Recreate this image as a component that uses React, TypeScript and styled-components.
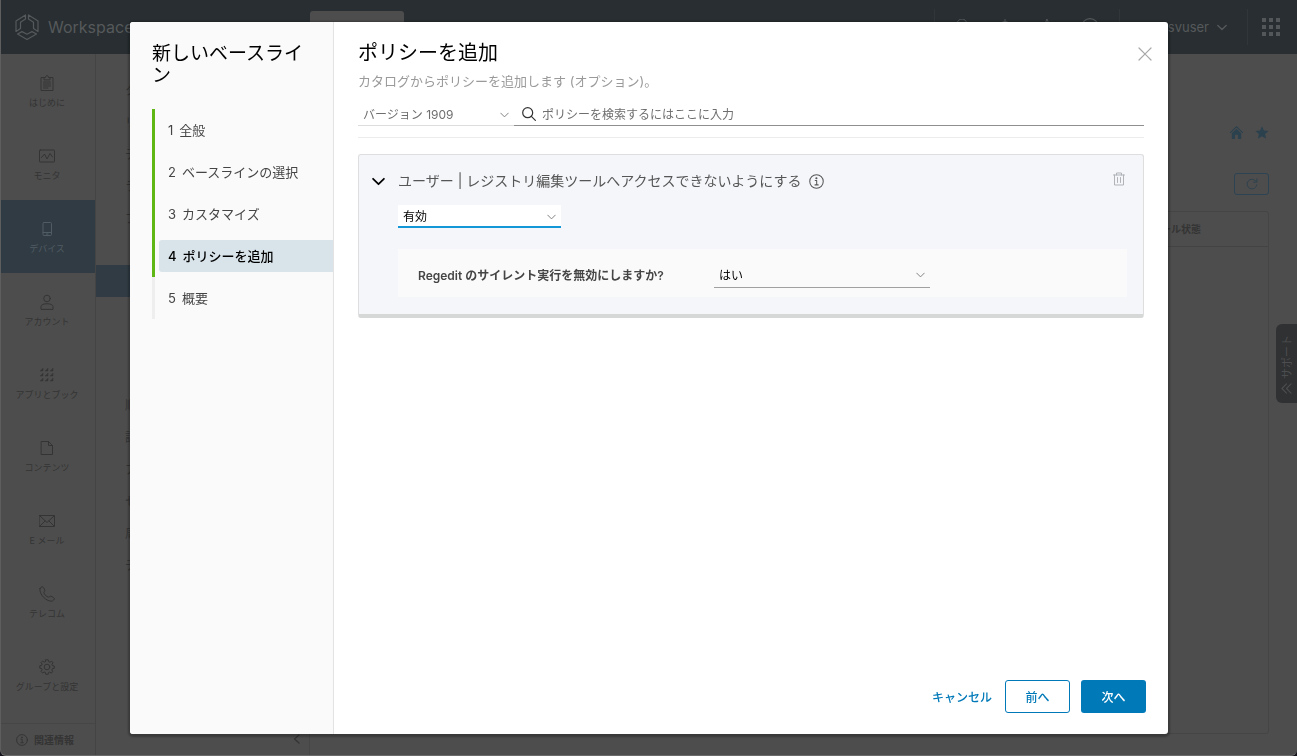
import React from "react";
import styled, { createGlobalStyle, css } from "styled-components";

const GlobalStyle = createGlobalStyle`
  *, *::before, *::after { box-sizing: border-box; }
  body {
    margin: 0;
    background: #15141c;
    font-family: Inter, "Noto Sans CJK JP", sans-serif;
    font-size: 12px;
    color: #333;
  }
  button, input, select { font: inherit; color: inherit; }
  button { cursor: pointer; background: none; border: 0; padding: 0; }
  a { color: inherit; text-decoration: none; }
  ul, ol { list-style: none; margin: 0; padding: 0; }
  h1, h2, h3, p { margin: 0; font-weight: 400; }
  svg { display: block; flex: none; }
`;

/* ---------- console behind the dialog ---------- */

const Console = styled.div`
  display: flex;
  flex-direction: column;
  height: 100vh;
  overflow: hidden;
  background: #4d4d4d;
  color: #343434;
  border-left: 1px solid #5e5e5e;
  border-bottom: 1px solid #6a6a6a;
  border-radius: 0 0 6px 6px;
`;

const TopBar = styled.header`
  display: flex;
  align-items: center;
  height: 54px;
  flex: none;
  padding-left: 13px;
  background: #282e31;
  color: #56595b;
`;

const Brand = styled.div`
  display: flex;
  align-items: center;
  gap: 8px;
  width: 296px;
  font-size: 16px;
  white-space: nowrap;
`;

const OrgPicker = styled.button`
  width: 94px;
  height: 32px;
  border-radius: 3px;
  background: #4d4d4d;
`;

const BarTools = styled.div`
  display: flex;
  align-items: center;
  gap: 26px;
  height: 36px;
  margin-left: auto;
  padding: 0 20px;
  border-left: 1px solid #303639;
`;

const UserMenu = styled.button`
  display: flex;
  align-items: center;
  justify-content: flex-end;
  gap: 8px;
  width: 128px;
  height: 36px;
  padding-right: 20px;
  border-left: 1px solid #303639;
  font-size: 13px;
`;

const AppsButton = styled.button`
  display: flex;
  align-items: center;
  width: 50px;
  height: 36px;
  padding-left: 14px;
  border-left: 1px solid #303639;
`;

const Body = styled.div`
  display: flex;
  flex: 1;
  min-height: 0;
`;

const SideBar = styled.nav`
  display: flex;
  flex-direction: column;
  width: 95px;
  flex: none;
  border-right: 1px solid #444;
`;

const SideLink = styled.a<{ $active?: boolean }>`
  display: flex;
  flex-direction: column;
  align-items: center;
  gap: 5px;
  height: 73px;
  padding: 21px 2px 0 0;
  font-size: 9px;
  line-height: 14px;
  ${(p) =>
    p.$active &&
    css`
      background: #303b43;
      color: #505c64;
    `}
`;

const AboutLink = styled.a`
  display: flex;
  align-items: center;
  gap: 6px;
  height: 32px;
  margin-top: auto;
  padding-left: 15px;
  border-top: 1px solid #464646;
  font-size: 10px;
  font-weight: 700;
`;

const SubNav = styled.nav`
  display: flex;
  flex-direction: column;
  width: 214px;
  flex: none;
  padding-top: 21px;
  border-right: 1px solid #464646;
`;

const SubGroup = styled.ul`
  padding-left: 29px;
  font-size: 12px;
  line-height: 32px;
`;

const SubCurrent = styled.a`
  display: block;
  height: 32px;
  margin: 30px 0 93px;
  background: #303b43;
`;

const Collapse = styled.button`
  margin: auto 9px 11px auto;
`;

const Main = styled.main`
  display: flex;
  flex-direction: column;
  align-items: flex-end;
  flex: 1;
  min-width: 0;
  padding: 71px 28px 21px 24px;
  color: #2b414e;
`;

const Shortcuts = styled.div`
  display: flex;
  gap: 11px;
`;

const RefreshButton = styled.button`
  display: flex;
  align-items: center;
  justify-content: center;
  width: 35px;
  height: 22px;
  margin: 33px 0 16px;
  border: 1px solid #2b4352;
  border-radius: 3px;
`;

const GridFrame = styled.div`
  flex: 1;
  width: 100%;
  border: 1px solid #454545;
  border-radius: 3px;
`;

const Grid = styled.table`
  width: 100%;
  border-collapse: collapse;
  font-size: 10px;
  color: #343434;

  th {
    height: 34px;
    padding: 0 67px 0 0;
    border-bottom: 1px solid #434343;
    text-align: right;
    font-weight: 700;
  }
`;

const SupportTab = styled.button`
  position: fixed;
  right: 0;
  top: 324px;
  display: flex;
  flex-direction: column;
  align-items: center;
  gap: 4px;
  width: 21px;
  padding: 11px 0 9px;
  border-radius: 6px 0 0 6px;
  background: #303133;
  color: #4c4d4f;
  font-size: 11px;
  line-height: 14px;
`;

const SupportText = styled.span`
  writing-mode: vertical-rl;
  text-orientation: sideways;
  transform: rotate(180deg);
`;

/* ---------- dialog ---------- */

const Overlay = styled.div`
  position: fixed;
  inset: 0;
  display: flex;
  padding: 22px 129px 22px 130px;
`;

const Dialog = styled.section`
  display: flex;
  flex: 1;
  min-width: 0;
  overflow: hidden;
  border-radius: 3px;
  background: #fff;
  box-shadow: 0 1px 2px 2px rgba(0, 0, 0, 0.25);
`;

const StepPane = styled.aside`
  width: 204px;
  flex: none;
  padding: 21px 0 0 22px;
  border-right: 1px solid #e3e3e3;
  background: #fafafa;
`;

const WizardTitle = styled.h1`
  width: 158px;
  height: 44px;
  margin-bottom: 22px;
  font-size: 19px;
  line-height: 22px;
  color: #000;
`;

const Step = styled.li<{ $reached?: boolean }>`
  display: flex;
  align-items: center;
  height: 42px;
  padding-left: 4px;
  border-left: 3px solid ${(p) => (p.$reached ? "#5eb715" : "#eee")};
`;

const StepButton = styled.button<{ $current?: boolean }>`
  display: flex;
  align-items: baseline;
  gap: 6px;
  width: 100%;
  height: 32px;
  padding: 0 0 0 9px;
  border-radius: 3px 0 0 3px;
  font-size: 13px;
  line-height: 32px;
  color: #454545;
  ${(p) =>
    p.$current &&
    css`
      background: #d9e4ea;
      color: #000;
      font-weight: 500;
    `}
`;

const Page = styled.div`
  display: flex;
  flex-direction: column;
  flex: 1;
  min-width: 0;
  padding: 19px 24px 21px;
`;

const PageHead = styled.div`
  display: flex;
  justify-content: space-between;
  align-items: flex-start;
`;

const PageTitle = styled.h2`
  font-size: 20px;
  line-height: 24px;
  color: #000;
`;

const Lead = styled.p`
  margin-top: 7px;
  font-size: 13px;
  line-height: 18px;
  color: #9a9a9a;
`;

const CloseButton = styled.button`
  padding: 6px 0;
  margin-right: -8px;
  color: #a8a8a8;
`;

const FilterRow = styled.div`
  display: flex;
  align-items: flex-end;
  margin-top: 12px;
  padding-bottom: 11px;
  border-bottom: 1px solid #ececec;
`;

const SelectBox = styled.div<{ $width: number }>`
  display: grid;
  align-items: center;
  width: ${(p) => p.$width}px;
  flex: none;

  > * { grid-area: 1 / 1; }
  > svg {
    justify-self: end;
    margin-right: 5px;
    color: #808080;
    pointer-events: none;
  }
`;

const Select = styled.select<{ $look: "quiet" | "focused" | "plain" }>`
  appearance: none;
  width: 100%;
  height: 23px;
  padding: 0 20px 0 5px;
  border: 0;
  border-radius: 0;
  outline: 0;
  background: transparent;
  font-size: 12px;
  ${(p) =>
    p.$look === "quiet" &&
    css`
      border-bottom: 1px solid #ddd;
      color: #6e6e6e;
    `}
  ${(p) =>
    p.$look === "focused" &&
    css`
      padding-top: 2px;
      border-bottom: 2px solid #1497d6;
      background: #fff;
      color: #000;
    `}
  ${(p) =>
    p.$look === "plain" &&
    css`
      height: 25px;
      padding-top: 2px;
      border-bottom: 1px solid #a0a0a0;
      color: #000;
    `}
`;

const SearchBox = styled.label`
  display: flex;
  align-items: center;
  gap: 6px;
  flex: 1;
  height: 24px;
  padding-left: 8px;
  border-bottom: 1px solid #8f8f8f;
  color: #333;

  input {
    flex: 1;
    min-width: 0;
    padding: 1px 0 0;
    border: 0;
    outline: 0;
    background: none;
    font-size: 12px;
  }
  input::placeholder { color: #6e6e6e; opacity: 1; }
`;

const Card = styled.article`
  display: grid;
  grid-template-columns: 26px 1fr;
  margin-top: 16px;
  padding: 16px 16px 17px 13px;
  border: 1px solid #dedede;
  border-bottom: 4px solid #d6d7d7;
  border-radius: 3px;
  background: #f4f6fa;
`;

const CardHead = styled.div`
  display: flex;
  align-items: center;
  height: 20px;
`;

const Toggle = styled.button`
  align-self: center;
  color: #000;
`;

const PolicyName = styled.h3`
  margin-right: 8px;
  font-size: 14px;
  line-height: 20px;
  color: #565656;
`;

const InfoButton = styled.button`
  color: #565656;
`;

const DeleteButton = styled.button`
  margin-left: auto;
  padding: 0 1px 4px 0;
  color: #b0b3b7;
`;

const CardBody = styled.div`
  grid-column: 2;
  padding-top: 14px;
`;

const Setting = styled.div`
  display: flex;
  align-items: center;
  height: 48px;
  margin-top: 21px;
  padding: 4px 0 0 20px;
  background: #fafafa;

  label {
    width: 296px;
    padding-bottom: 2px;
    font-weight: 600;
    color: #454545;
  }
`;

const Footer = styled.footer`
  display: flex;
  justify-content: flex-end;
  gap: 11px;
  margin: auto -2px 0 0;
`;

const Action = styled.button<{ $kind: "link" | "outline" | "solid" }>`
  min-width: 65px;
  height: 33px;
  border-radius: 3px;
  font-weight: 500;
  color: #0079b8;
  ${(p) => p.$kind === "link" && css`margin-right: 2px; min-width: 0;`}
  ${(p) => p.$kind === "outline" && css`border: 1px solid #0079b8;`}
  ${(p) =>
    p.$kind === "solid" &&
    css`
      background: #0079b8;
      color: #fff;
    `}
`;

/* ---------- icons ---------- */

type IconProps = {
  size?: number;
  width?: number;
  height?: number;
  box?: string;
  stroke?: number;
  children: React.ReactNode;
};

const Icon = ({ size = 16, width, height, box = "0 0 16 16", stroke = 1, children }: IconProps) => (
  <svg
    width={width ?? size}
    height={height ?? size}
    viewBox={box}
    fill="none"
    stroke="currentColor"
    strokeWidth={stroke}
    strokeLinecap="round"
    strokeLinejoin="round"
    aria-hidden="true"
  >
    {children}
  </svg>
);

const Chevron = ({ width = 9, stroke = 1.3 }: { width?: number; stroke?: number }) => (
  <Icon width={width} height={Math.round(width * 0.67)} box="0 0 12 8" stroke={stroke}>
    <path d="M1 1.5 6 6.5 11 1.5" />
  </Icon>
);

const Info = ({ size, stroke = 1.1 }: { size: number; stroke?: number }) => (
  <Icon size={size} stroke={stroke}>
    <circle cx="8" cy="8" r="7.2" />
    <path d="M6.6 7h1.6v4.6M6.4 11.6h3.4" />
    <circle cx="7.9" cy="4.5" r=".6" fill="currentColor" />
  </Icon>
);

const Logo = () => (
  <svg width="26" height="28" viewBox="0 0 26 28" fill="none" stroke="#56595b" strokeWidth="1.2" strokeLinejoin="round" aria-hidden="true">
    <path d="M11.500 2V6L6.500 9.200V15.500L2 18.500V8Z" />
    <path d="M14.500 2V6L19.500 9.200V15.500L24 18.500V8Z" />
    <path d="M3.500 21 8 18.600 13 21.200 18 18.600 22.500 21 13 26.500Z" />
  </svg>
);

const nine = [1.5, 6.5, 11.5].flatMap((y) => [1.5, 6.5, 11.5].map((x) => [x, y]));

const navItems: { label: string; active?: boolean; art: React.ReactNode }[] = [
  {
    label: "はじめに",
    art: (
      <>
        <path d="M5 2.500H2V15.500H14V2.500H11" />
        <path d="M5 4.500V2.500H6.500C6.500 0 9.500 0 9.500 2.500H11V4.500Z" />
        <path d="M4.500 7H11.500M4.500 9H11.500M4.500 11H11.500M4.500 13H9" />
      </>
    ),
  },
  {
    label: "モニタ",
    art: (
      <>
        <rect x=".5" y="2" width="15" height="12" rx=".8" />
        <path d="M2.500 9.500 5.500 6 8 11 11 5.500 13.500 9" />
      </>
    ),
  },
  {
    label: "デバイス",
    active: true,
    art: (
      <>
        <rect x="4" y="1.500" width="8.500" height="13" rx="1" />
        <path d="M4 11.500H12.500M7.500 13H9" />
      </>
    ),
  },
  {
    label: "アカウント",
    art: (
      <>
        <circle cx="8" cy="4.500" r="3.300" />
        <path d="M2 15V12.500C2 8.800 14 8.800 14 12.500V15Z" />
      </>
    ),
  },
  {
    label: "アプリとブック",
    art: (
      <>
        {nine.map(([x, y]) => (
          <path key={`${x}-${y}`} d={`M${x + 2.5} ${y}V${y + 2.5}H${x}Z`} fill="currentColor" strokeWidth=".5" />
        ))}
      </>
    ),
  },
  {
    label: "コンテンツ",
    art: <path d="M2.500 1.500H9.500L13.500 5.500V14.500H2.500ZM9.500 1.500V5.500H13.500" />,
  },
  {
    label: "E メール",
    art: (
      <>
        <rect x=".5" y="2.500" width="15" height="11" />
        <path d="M1 3 8 9.500 15 3M1 13 6 8M15 13 10 8" />
      </>
    ),
  },
  {
    label: "テレコム",
    art: (
      <path d="M1 2.500C2.500.2 3.600.2 4.600 1.800L5.800 4C6.300 5 4.600 5.700 4.800 6.600C5.500 8.800 7.200 10.500 9.400 11.200C10.300 11.400 11 9.700 12 10.200L14.500 11.500C16 12.500 15.500 13.600 13.500 15C8 16.500-.5 8 1 2.500Z" />
    ),
  },
  {
    label: "グループと設定",
    art: (
      <>
        <circle cx="8" cy="8" r="2.800" />
        <path d="M6.800.8H9.200L9.600 2.700 11 3.300 12.700 2.200 14 3.800 12.900 5.300 13.400 6.600 15.300 7V9.200L13.400 9.600 12.800 11 13.800 12.700 12.200 14 10.700 13 9.500 13.500 9.200 15.300H6.800L6.400 13.500 5.200 13 3.600 14 2 12.400 3.100 10.800 2.600 9.500.8 9.200V6.800L2.600 6.400 3.200 5.200 2.100 3.600 3.600 2 5.200 3.200 6.400 2.600Z" />
      </>
    ),
  },
];

const steps = ["全般", "ベースラインの選択", "カスタマイズ", "ポリシーを追加", "概要"];
const currentStep = 3;

export default function App() {
  return (
    <>
      <GlobalStyle />
      <Console>
        <TopBar>
          <Brand>
            <Logo />
            Workspace
          </Brand>
          <OrgPicker aria-label="組織グループ" />
          <BarTools>
            <Icon><circle cx="7" cy="5" r="5" /><path d="M10.500 8.500 15 13" /></Icon>
            <Icon><path d="M8 0V2M3 12V7C3 1 13 1 13 7V12Z" /></Icon>
            <Icon><path d="M8 0 10 5H15L11 9 12 14 8 11 4 14 5 9 1 5H6Z" /></Icon>
            <Icon size={18}><circle cx="8" cy="8" r="7.500" /></Icon>
          </BarTools>
          <UserMenu>
            rsvuser
            <Chevron width={10} stroke={1.6} />
          </UserMenu>
          <AppsButton aria-label="アプリ">
            <svg width="18" height="18" viewBox="0 0 18 18" fill="#53575a" aria-hidden="true">
              {[0, 7, 14].flatMap((y) => [0, 7, 14].map((x) => <rect key={`${x}-${y}`} x={x} y={y} width="4" height="4" />))}
            </svg>
          </AppsButton>
        </TopBar>
        <Body>
          <SideBar>
            {navItems.map((item) => (
              <SideLink key={item.label} href="#" $active={item.active}>
                <Icon>{item.art}</Icon>
                {item.label}
              </SideLink>
            ))}
            <AboutLink href="#">
              <Info size={12} stroke={1.3} />
              関連情報
            </AboutLink>
          </SideBar>
          <SubNav>
            <SubGroup>
              {["タグ", "リスト", "データ", "ライフ", "プラン"].map((t) => (
                <li key={t}><a href="#">{t}</a></li>
              ))}
            </SubGroup>
            <SubCurrent href="#" aria-label="ベースライン" />
            <SubGroup>
              {["順守", "証明", "アプリ", "セル", "周辺", "データ"].map((t) => (
                <li key={t}><a href="#">{t}</a></li>
              ))}
            </SubGroup>
            <Collapse aria-label="折りたたむ">
              <Icon width={7} height={10} box="0 0 7 10" stroke={1.3}><path d="M6 1 1.500 5 6 9" /></Icon>
            </Collapse>
          </SubNav>
          <Main>
            <Shortcuts>
              <svg width="15" height="15" viewBox="0 0 16 16" fill="currentColor" aria-hidden="true">
                <path d="M8 1 .8 8l.8.800L8 2.700l6.400 6.100.800-.800ZM8 4 3 8.800V15H6.500V10.500H9.500V15H13V8.800Z" />
              </svg>
              <svg width="14" height="15" viewBox="0 0 16 16" fill="currentColor" aria-hidden="true">
                <path d="m8 .8 2.200 4.900 5.300.500-4 3.600 1.200 5.300L8 12.400l-4.700 2.700 1.200-5.300-4-3.600 5.300-.500Z" />
              </svg>
            </Shortcuts>
            <RefreshButton aria-label="更新">
              <Icon size={12} stroke={1.2}><path d="M13.500 4.500A6.500 6.500 0 1 0 14.500 9M14.500 1V5.500H10" /></Icon>
            </RefreshButton>
            <GridFrame>
              <Grid>
                <thead>
                  <tr><th scope="col">インストール状態</th></tr>
                </thead>
              </Grid>
            </GridFrame>
          </Main>
        </Body>
      </Console>
      <SupportTab>
        <SupportText>サポート</SupportText>
        <Icon size={11} box="0 0 12 12" stroke={1.2}><path d="M6 1 1 6 6 11M11 1 6 6 11 11" /></Icon>
      </SupportTab>

      <Overlay>
        <Dialog role="dialog" aria-modal="true" aria-labelledby="wizard-title">
          <StepPane>
            <WizardTitle id="wizard-title">新しいベースライン</WizardTitle>
            <ol>
              {steps.map((label, i) => (
                <Step key={label} $reached={i <= currentStep}>
                  <StepButton $current={i === currentStep} aria-current={i === currentStep ? "step" : undefined}>
                    <span>{i + 1}</span>
                    <span>{label}</span>
                  </StepButton>
                </Step>
              ))}
            </ol>
          </StepPane>
          <Page>
            <PageHead>
              <div>
                <PageTitle>ポリシーを追加</PageTitle>
                <Lead>カタログからポリシーを追加します (オプション)。</Lead>
              </div>
              <CloseButton aria-label="閉じる">
                <Icon size={14} box="0 0 14 14" stroke={1.2}><path d="M1 1 13 13M13 1 1 13" /></Icon>
              </CloseButton>
            </PageHead>
            <FilterRow>
              <SelectBox $width={156}>
                <Select $look="quiet" aria-label="バージョン" defaultValue="1909">
                  <option value="1909">バージョン 1909</option>
                </Select>
                <Chevron />
              </SelectBox>
              <SearchBox>
                <Icon size={14} stroke={1.4}><circle cx="6.500" cy="6.500" r="5.700" /><path d="M10.700 10.700 15.300 15.300" /></Icon>
                <input type="text" aria-label="ポリシーを検索" placeholder="ポリシーを検索するにはここに入力" />
              </SearchBox>
            </FilterRow>
            <Card>
              <Toggle aria-label="折りたたむ" aria-expanded="true">
                <Chevron width={13} stroke={1.6} />
              </Toggle>
              <CardHead>
                <PolicyName>ユーザー | レジストリ編集ツールへアクセスできないようにする</PolicyName>
                <InfoButton aria-label="情報"><Info size={15} /></InfoButton>
                <DeleteButton aria-label="削除">
                  <Icon size={14} box="0 0 14 14">
                    <path d="M1.500 3H12.500M4.500 3V1H9.500V3M2.500 3V13H11.500V3M5.500 5.500V10.500M8.500 5.500V10.500" />
                  </Icon>
                </DeleteButton>
              </CardHead>
              <CardBody>
                <SelectBox $width={163}>
                  <Select $look="focused" aria-label="状態" defaultValue="on">
                    <option value="on">有効</option>
                    <option value="off">無効</option>
                  </Select>
                  <Chevron />
                </SelectBox>
                <Setting>
                  <label htmlFor="silent">Regedit のサイレント実行を無効にしますか?</label>
                  <SelectBox $width={216}>
                    <Select id="silent" $look="plain" defaultValue="yes">
                      <option value="yes">はい</option>
                      <option value="no">いいえ</option>
                    </Select>
                    <Chevron />
                  </SelectBox>
                </Setting>
              </CardBody>
            </Card>
            <Footer>
              <Action $kind="link">キャンセル</Action>
              <Action $kind="outline">前へ</Action>
              <Action $kind="solid">次へ</Action>
            </Footer>
          </Page>
        </Dialog>
      </Overlay>
    </>
  );
}
